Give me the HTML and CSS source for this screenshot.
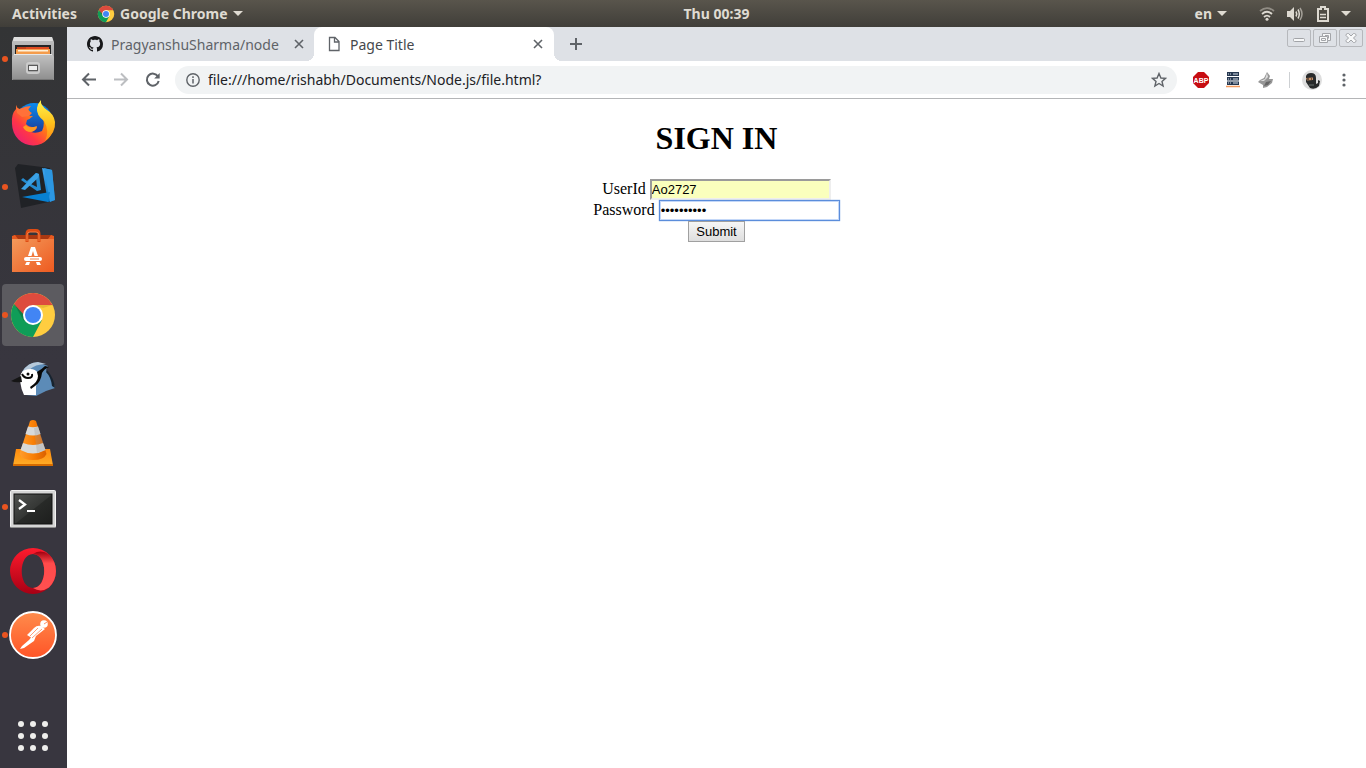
FILE: index.html
```html
<!DOCTYPE html>
<html lang="en">
<head>
<meta charset="utf-8">
<title>Page Title</title>
<link rel="stylesheet" href="styles.css">
</head>
<body>
<svg class="defs" width="0" height="0" aria-hidden="true">
  <defs>
    <linearGradient id="steel" x1="0" y1="0" x2="0" y2="1"><stop offset="0" stop-color="#c2c2c2"/><stop offset="1" stop-color="#8e8e8e"/></linearGradient>
    <linearGradient id="fox" x1="0" y1="1" x2="1" y2="0"><stop offset="0" stop-color="#e31587"/><stop offset=".35" stop-color="#ff3647"/><stop offset=".7" stop-color="#ff9a00"/><stop offset="1" stop-color="#ffe226"/></linearGradient>
    <linearGradient id="tail" x1="0" y1="0" x2="0" y2="1"><stop offset="0" stop-color="#fff44f"/><stop offset=".55" stop-color="#ffc21c"/><stop offset="1" stop-color="#ff8a16"/></linearGradient>
    <linearGradient id="globe" x1="0" y1="0" x2="0" y2="1"><stop offset="0" stop-color="#0a8cf0"/><stop offset="1" stop-color="#20247e"/></linearGradient>
    <linearGradient id="bag" x1="0" y1="0" x2="1" y2="1"><stop offset="0" stop-color="#f39a5b"/><stop offset="1" stop-color="#ee5a20"/></linearGradient>
    <linearGradient id="cone" x1="0" y1="0" x2="1" y2="0"><stop offset="0" stop-color="#ff9d2e"/><stop offset=".5" stop-color="#f98006"/><stop offset="1" stop-color="#d95f00"/></linearGradient>
    <linearGradient id="conebase" x1="0" y1="0" x2="0" y2="1"><stop offset="0" stop-color="#ff8a0c"/><stop offset="1" stop-color="#ffae28"/></linearGradient>
    <linearGradient id="screen" x1="0" y1="0" x2="1" y2="1"><stop offset="0" stop-color="#505250"/><stop offset=".5" stop-color="#353735"/><stop offset=".52" stop-color="#282a28"/><stop offset="1" stop-color="#1d1e1d"/></linearGradient>
    <linearGradient id="opera" x1="0" y1="0" x2="0" y2="1"><stop offset="0" stop-color="#ff1b2d"/><stop offset="1" stop-color="#a70014"/></linearGradient>
    <linearGradient id="operaback" x1="0" y1="0" x2="0" y2="1"><stop offset="0" stop-color="#a00010"/><stop offset=".3" stop-color="#ff4b4b"/><stop offset="1" stop-color="#ff5050"/></linearGradient>
    <linearGradient id="post" x1="0" y1="0" x2="0" y2="1"><stop offset="0" stop-color="#ff8c4c"/><stop offset="1" stop-color="#ff5427"/></linearGradient>
    <linearGradient id="blade" x1="0" y1="0" x2="0" y2="1"><stop offset="0" stop-color="#42a5ec"/><stop offset="1" stop-color="#0673c4"/></linearGradient>
    <symbol id="chrome" viewBox="0 0 48 48">
      <circle cx="24" cy="24" r="22" fill="#ffcd40"/>
      <path d="M24 14H43.600A22 22 0 0 0 5 13L15 30 16 24Z" fill="#dd4b3e"/>
      <path d="M5 13A22 22 0 0 0 24 46L33 29 24 33 15.500 29Z" fill="#0f9d58"/>
      <path d="M24 14H43.600L34 17Z" fill="#e8b935"/>
      <path d="M15 30 5 13 16 25Z" fill="#0b8047"/>
      <circle cx="24" cy="24" r="10" fill="#fff"/>
      <circle cx="24" cy="24" r="8" fill="#4285f4"/>
    </symbol>
  </defs>
</svg>
<div class="desktop">
  <header class="panel">
    <nav class="panel-left">
      <button type="button">Activities</button>
      <button type="button" class="app-menu"><svg width="18" height="18" aria-hidden="true"><use href="#chrome"/></svg>Google Chrome<i class="caret"></i></button>
    </nav>
    <button type="button" class="clock">Thu 00:39</button>
    <div class="panel-right">
      <button type="button" class="lang">en<i class="caret"></i></button>
      <button type="button" class="status" aria-label="System">
        <svg width="16" height="16" viewBox="0 0 16 16" fill="none" stroke="#ddd9d1" stroke-width="1.800"><path d="M1 5Q8-.8 15 5" opacity=".45"/><path d="M3 8Q8 3.600 13 8M5 11Q8 8.200 11 11"/><circle cx="8" cy="13.200" r="1.500" fill="#ddd9d1" stroke="none"/></svg>
        <svg width="16" height="16" viewBox="0 0 16 16" fill="none" stroke="#ddd9d1" stroke-width="1.500"><path d="M0 5H3L7 1V15L3 11H0Z" fill="#ddd9d1" stroke="none"/><path d="M9 5.500Q10.500 8 9 10.500M11 3.500Q13.600 8 11 12.500"/><path d="M13 2Q17 8 13 14" opacity=".6"/></svg>
        <svg width="16" height="16" viewBox="0 0 16 16" fill="none" stroke="#ddd9d1"><path d="M6 3V1H10V3H13V15H3V3Z" stroke-width="2"/><path d="M5 8.500H11M5 11.500H11" stroke-width="1.600"/></svg>
        <i class="caret"></i>
      </button>
    </div>
  </header>

  <nav class="dock" aria-label="Dock">
    <button type="button" class="running" aria-label="Files"><svg viewBox="0 0 66 64">
      <path d="M14 10H52L54 15V51H12V15Z" fill="url(#steel)"/><path d="M14 10H52L53 14H13Z" fill="#dedede"/>
      <path d="M15 18H51V28H15Z" fill="#252525"/><path d="M17 20H49V27H17Z" fill="#c4421b"/><path d="M26 20H49V22H26Z" fill="#df4b20"/><path d="M16 22H50V28H16Z" fill="#f49c4c"/><path d="M18 23H48V24.500H18Z" fill="#fff0d7"/>
      <path d="M14 27H52L54 30V53H12V30Z" fill="url(#steel)"/><path d="M14 27.500H52" stroke="#e7e7e7"/><path d="M13 52.500H53" stroke="#777"/>
      <rect x="27" y="36" width="12" height="10" rx="2" fill="#a9a9a9" stroke="#cbcbcb" stroke-width="2"/><rect x="28.500" y="38.500" width="9" height="5" fill="#eee" stroke="#5a5a5a"/>
    </svg></button>
    <button type="button" aria-label="Firefox"><svg viewBox="0 0 66 64">
      <circle cx="34" cy="31" r="19" fill="url(#globe)"/>
      <path d="M16 14Q17 18 20 18Q24 16 27 17L31 22 29 25 33 25Q30 28 27 29L26 33Q30 37 37 36 37 39 31 41 36 43 42 40 46 32 41 22Q49 24 54 32A21 22 0 0 1 12 33Q11 23 16 18Z" fill="url(#fox)"/>
      <path d="M16 14Q17 18 20 18Q25 15 31 15Q28 18 28 20L32 22 29 25 22 26 17 22Z" fill="#ff7139"/>
      <path d="M41 9Q40 14 47 19Q54 23 55 31Q56 42 45 50Q50 40 44 30Q36 24 37 17Q38 12 41 9Z" fill="url(#tail)"/>
      <path d="M26 34Q29 38 37 35Q36 40 31 41Q25 41 23 36Z" fill="#ff9a21"/>
    </svg></button>
    <button type="button" class="running" aria-label="Visual Studio Code"><svg viewBox="0 0 66 64">
      <path d="M18 9 50 13 53 46 21 53 15 13Z" fill="#202226"/>
      <path d="M42 13 52 15 55 45 48 47Z" fill="url(#blade)"/><path d="M44 13 52 15 55 45 50 47Z" fill="#2c97e2"/><path d="M22 42 50 37 48 47Z" fill="#0880d1"/>
      <path d="M36 18 39 19 41 35 37 36 21 25 23 23 27 26ZM36 23 31 29 37 32Z" fill="#248bd0" fill-rule="evenodd"/><path d="M36 18 39 19 38 23 25 35 21 34Z" fill="#3ba1e5"/>
    </svg></button>
    <button type="button" aria-label="Ubuntu Software"><svg viewBox="0 0 66 64">
      <path d="M14 16H52L54 20H12Z" fill="#a93811"/><path d="M12 17 15 16 18 20H12ZM54 17 51 16 48 20H54Z" fill="#e75b21"/>
      <path d="M12 20H54V53H12Z" fill="url(#bag)"/><path d="M27 23V15Q27 11.500 30 11.500H36Q39 11.500 39 15V23" fill="none" stroke="#df4c13" stroke-width="3"/><path d="M27 22V16Q27 13 30 13H36Q39 13 39 16V22" fill="none" stroke="#f17c43"/>
      <path d="M31 28H35L38 37H34.500L33 32 31.500 37H28ZM26.500 43H30L29 46H25ZM36 43H39.500L41 46H37Z" fill="#fff"/><rect x="24" y="38" width="18" height="4" rx="2" fill="#fff"/><path d="M30 40H39" stroke="#ee8551"/>
    </svg></button>
    <button type="button" class="running active" aria-label="Google Chrome"><svg viewBox="0 0 66 64"><use href="#chrome" x="9" y="8" width="48" height="48"/></svg></button>
    <button type="button" aria-label="Bluejay"><svg viewBox="0 0 66 64">
      <path d="M22 25Q28 15 38 15.500L48 19 46 23Q52 29 55 41L46 44 36 49 26 48Z" fill="#5c8bb7"/><path d="M22 25Q28 15 38 15L46 17Q35 17 29 23Z" fill="#b6c9da"/>
      <path d="M20 32Q20 25 25 23Q34 20 38 26Q40 33 36 39L36 48 24 48Q21 42 20 34Z" fill="#fff"/>
      <path d="M11 34 21 29 22 35Q15 36 11 34Z" fill="#151515"/>
      <path d="M22 27Q24 31 28 31Q33 31 32 27" fill="none" stroke="#080808" stroke-width="2"/><circle cx="28" cy="27" r="1.500" fill="#080808"/>
      <path d="M37 25Q42 22 45 19L49 20Q44 22 42 26Q41 35 35 39L31 42 30 40Q38 35 38 29Z" fill="#080808"/>
      <path d="M47 23Q54 31 55 41L52 39Q51 30 46 25Z" fill="#17232e"/>
    </svg></button>
    <button type="button" aria-label="VLC"><svg viewBox="0 0 66 64">
      <path d="M16 38H50L53 54.500H13Z" fill="url(#conebase)"/><path d="M13 53H53V55H13Z" fill="#d66b00"/>
      <path d="M30 10Q33 8 36 10L46.500 43Q44 49 33 49 22 49 19.500 43Z" fill="url(#cone)"/>
      <path d="M28 15.500Q33 17 38 15.500L40.500 23Q33 26 25.500 23ZM23 32Q33 36 43 32L45.500 39Q33 46 20.500 39Z" fill="#d7d9d9"/><path d="M34 17 38 15.500 45.500 39 37 42Z" fill="#999" opacity=".3"/>
    </svg></button>
    <button type="button" class="running" aria-label="Terminal"><svg viewBox="0 0 66 64">
      <rect x="10.500" y="15.500" width="45" height="37" rx="1" fill="#d5d5d5" stroke="#f2f2f2"/><path d="M11 52.500H55" stroke="#8d8d8d"/><rect x="14" y="19" width="38" height="30" fill="url(#screen)" stroke="#111"/>
      <path d="M19 25 25 29.500 19 34" fill="none" stroke="#fff" stroke-width="2.300"/><path d="M27 36H35" stroke="#fff" stroke-width="2"/>
    </svg></button>
    <button type="button" aria-label="Opera"><svg viewBox="0 0 66 64">
      <path d="M33 9A23 23 0 0 1 33 55A23 23 0 0 1 33 9ZM33 15C18 15 18 49 33 49S48 15 33 15Z" fill="url(#opera)" fill-rule="evenodd"/>
      <path d="M33 15Q41 10 49 15.500A23 23 0 0 1 49 48.500Q41 54 33 49C48 49 48 15 33 15Z" fill="url(#operaback)"/>
    </svg></button>
    <button type="button" class="running" aria-label="Postman"><svg viewBox="0 0 66 64">
      <circle cx="33" cy="32" r="23" fill="url(#post)" stroke="#fff" stroke-width="1.800"/><circle cx="44" cy="21" r="3.800" fill="#fff"/><path d="M44 21 47 19" stroke="#ff713c" stroke-width=".8"/>
      <path d="M41 23Q37 22 34 25L27 32 31 34.500 29 37 22 43 20 46 24 45 34 38 36 33 45 26Z" fill="#fff"/><path d="M42 26 32 35M38 25 30 33" fill="none" stroke="#ff743f" stroke-width=".7"/>
    </svg></button>
    <button type="button" class="apps" aria-label="Show Applications"><svg viewBox="0 0 66 64" fill="#eeeeec"><circle cx="21" cy="20" r="3"/><circle cx="33" cy="20" r="3"/><circle cx="45" cy="20" r="3"/><circle cx="21" cy="32" r="3"/><circle cx="33" cy="32" r="3"/><circle cx="45" cy="32" r="3"/><circle cx="21" cy="44" r="3"/><circle cx="33" cy="44" r="3"/><circle cx="45" cy="44" r="3"/></svg></button>
  </nav>

  <div class="browser">
    <div class="tabstrip">
      <div class="tab">
        <svg width="16" height="16" viewBox="0 0 16 16" aria-hidden="true"><path fill="#17181a" d="M8 0C3.580 0 0 3.580 0 8c0 3.540 2.290 6.530 5.470 7.590.4.070.55-.17.55-.38 0-.19-.01-.82-.01-1.490-2.010.37-2.530-.49-2.690-.94-.09-.23-.48-.94-.82-1.130-.28-.15-.68-.52-.01-.53.63-.01 1.080.58 1.230.82.72 1.210 1.870.87 2.330.66.070-.52.28-.87.51-1.070-1.780-.2-3.640-.89-3.640-3.950 0-.87.31-1.590.82-2.150-.08-.2-.36-1.020.08-2.120 0 0 .67-.21 2.200.82.64-.18 1.320-.27 2-.27s1.360.09 2 .27c1.530-1.040 2.200-.82 2.200-.82.44 1.100.16 1.920.08 2.120.51.56.82 1.270.82 2.150 0 3.070-1.870 3.750-3.650 3.950.29.25.54.73.54 1.480 0 1.070-.01 1.930-.01 2.200 0 .21.15.46.55.38A8.010 8.010 0 0 0 16 8c0-4.420-3.580-8-8-8z"/></svg>
        <span class="tab-title">PragyanshuSharma/node</span>
        <button type="button" class="close" aria-label="Close tab"><svg width="10" height="10" viewBox="0 0 10 10"><path d="M1 1 9 9M9 1 1 9"/></svg></button>
      </div>
      <div class="tab current">
        <svg width="16" height="16" viewBox="0 0 16 16" aria-hidden="true"><path d="M3.500 1.500H9L13 5.500V14.500H3.500ZM8.500 1.500V6H13" fill="none" stroke="#5f6368" stroke-width="1.300"/></svg>
        <span class="tab-title">Page Title</span>
        <button type="button" class="close" aria-label="Close tab"><svg width="10" height="10" viewBox="0 0 10 10"><path d="M1 1 9 9M9 1 1 9"/></svg></button>
      </div>
      <button type="button" class="new-tab" aria-label="New tab"><svg width="12" height="12" viewBox="0 0 12 12"><path d="M6 0V12M0 6H12"/></svg></button>
      <div class="window-controls">
        <button type="button" aria-label="Minimize"><svg width="14" height="12" viewBox="0 0 14 12"><rect x="1.500" y="6.500" width="11" height="3" rx="1"/></svg></button>
        <button type="button" aria-label="Restore"><svg width="14" height="12" viewBox="0 0 14 12"><path d="M4.500 1.500H12.500V8.500H9.500V10.500H1.500V4.500H4.500ZM4.500 4.500H9.500V8.500M7 3.500H10.500V6.500M3.500 6.500H7.500V8.500H3.500Z"/></svg></button>
        <button type="button" aria-label="Close"><svg width="14" height="12" viewBox="0 0 14 12"><path d="M2 2.500 3.500 1.500H4.500L7 4 9.500 1.500H10.500L12 2.500V3.500L9.500 6 12 8.500V9.500L10.500 10.500H9.500L7 8 4.500 10.500H3.500L2 9.500V8.500L4.500 6 2 3.500Z"/></svg></button>
      </div>
    </div>
    <div class="toolbar">
      <div class="nav-buttons">
        <button type="button" aria-label="Back"><svg width="16" height="16" viewBox="0 0 16 16"><path d="M15 7.500H2M8 1.500 2 7.500 8 13.500"/></svg></button>
        <button type="button" aria-label="Forward" disabled><svg width="16" height="16" viewBox="0 0 16 16"><path d="M1 7.500H14M8 1.500 14 7.500 8 13.500"/></svg></button>
        <button type="button" aria-label="Reload"><svg width="16" height="16" viewBox="0 0 16 16"><path d="M13 4.500A6 6 0 1 0 13.700 9"/><path d="M14.700 1V6.500H9.200Z" fill="#5f6368" stroke="none"/></svg></button>
      </div>
      <div class="omnibox">
        <svg width="14" height="14" viewBox="0 0 14 14" fill="none" stroke="#5f6368" aria-hidden="true"><circle cx="7" cy="7" r="6.200" stroke-width="1.400"/><path d="M7 6V10.500M7 3.300V5" stroke-width="1.500"/></svg>
        <input type="text" aria-label="Address" value="file:///home/rishabh/Documents/Node.js/file.html?">
        <button type="button" aria-label="Bookmark"><svg width="16" height="16" viewBox="0 0 16 16"><path d="M8 1.500 9.900 6 14.500 6.300 11 9.400 12.100 14 8 11.500 3.900 14 5 9.400 1.500 6.300 6.100 6Z" fill="none" stroke="#5f6368" stroke-width="1.400"/></svg></button>
      </div>
      <div class="extensions">
        <button type="button" aria-label="Adblock Plus"><svg width="16" height="16" viewBox="0 0 16 16"><path d="M5 0H11L16 5V11L11 16H5L0 11V5Z" fill="#c70d12"/><text class="abp" x="8" y="11" text-anchor="middle">ABP</text></svg></button>
        <button type="button" aria-label="Servers"><svg width="16" height="16" viewBox="0 0 16 16"><path d="M2 0H14V4H2ZM2 5H14V8.500H2ZM2 9.500H14V13H2Z" fill="#263850"/><path d="M3 2H4M5 2H6M8 2H13M3 7H4M5 7H6M8 7H13M3 11H4M5 11H6M8 11H13" stroke="#d3dce6"/><path d="M1 14.500H15" stroke="#f39a5c" stroke-width="1.500"/></svg></button>
        <button type="button" aria-label="Bird"><svg width="16" height="16" viewBox="0 0 16 16"><path d="M10 0 13 4 12 7 16 7 15 11 10 15 6 16 6 13 1 10 3 8 7 6Z" fill="#979797"/><path d="M10 1 11 5 7 9 3 9 8 7Z" fill="#dedede"/><path d="M9 10 14 9 11 13 7 14Z" fill="#666"/></svg></button>
        <span class="divider"></span>
      </div>
      <button type="button" class="profile" aria-label="Profile"><svg width="20" height="20" viewBox="0 0 20 20"><circle cx="10" cy="10" r="10" fill="#dedede"/><path d="M4 6Q5 3 9 3 14 3 14 8V14L16 13 16 10 18 11 17 16Q13 20 8 18L6 15 4 12Z" fill="#282a2b"/><path d="M4 8 11 7.500 11 10 5 10.500Z" fill="#c58e65"/><path d="M5 9H7M9 9H10" stroke="#111"/><path d="M7 15 12 15" stroke="#68706e"/></svg></button>
      <button type="button" aria-label="Menu"><svg width="4" height="16" viewBox="0 0 4 16" fill="#5f6368"><circle cx="2" cy="3" r="1.600"/><circle cx="2" cy="8" r="1.600"/><circle cx="2" cy="13" r="1.600"/></svg></button>
    </div>
    <main class="page">
      <h1>SIGN IN</h1>
      <form>
        <div class="field"><label for="userid">UserId</label><input class="filled" type="text" id="userid" value="Ao2727"></div>
        <div class="field"><label for="password">Password</label><input class="focused" type="password" id="password" value="aaaaaaaaaa"></div>
        <button class="submit" type="button">Submit</button>
      </form>
    </main>
  </div>
</div>
</body>
</html>
```
FILE: styles.css
```css
* { box-sizing: border-box; }
body { margin: 0; background: #fff; font-family: "Noto Sans", "Open Sans", sans-serif; }
button { margin: 0; padding: 0; border: 0; background: none; color: inherit; font: inherit; }
svg { display: block; flex: none; }
.defs { position: absolute; }

.desktop { display: grid; grid-template: auto 1fr / auto 1fr; min-height: 100vh; }

/* Top panel */
.panel {
  grid-column: 1 / -1;
  display: grid;
  grid-template-columns: 1fr auto 1fr;
  align-items: center;
  height: 27px;
  background: linear-gradient(#59554c, #403e39);
  color: #dfdbd2;
  font-size: 14px;
  font-weight: 700;
}
.panel button { display: flex; align-items: center; }
.panel-left { display: flex; gap: 20px; padding-left: 12px; }
.app-menu { gap: 5px; }
.clock { padding-left: 67px; }
.panel-right { display: flex; justify-content: flex-end; gap: 32px; padding-right: 15px; }
.panel .lang { gap: 5px; }
.panel .status { gap: 12px; }
.panel .status .caret { margin-left: -2px; }
.caret { border: 5px solid transparent; border-top-color: #dfdbd2; border-bottom: 0; }

/* Dock */
.dock { display: flex; flex-direction: column; width: 67px; background: linear-gradient(#333435, #38363f 45%, #38363f); }
.dock button { position: relative; width: 66px; height: 64px; }
.dock svg { position: relative; width: 66px; height: 64px; }
.dock .running::after {
  content: "";
  position: absolute;
  left: 2px;
  top: 29px;
  width: 6px;
  height: 6px;
  border-radius: 50%;
  background: #e95420;
}
.dock .active::before {
  content: "";
  position: absolute;
  inset: 1px 2px;
  border-radius: 4px;
  background: #5c5b60;
}
.dock .apps { margin-top: auto; }

/* Browser window */
.browser { display: flex; flex-direction: column; min-width: 0; background: #fff; }
.tabstrip { display: flex; height: 34px; background: #dee1e6; color: #5f6368; font-size: 14px; }
.tab { display: flex; align-items: center; gap: 8px; width: 247px; padding: 0 10px 0 20px; white-space: nowrap; }
.tab-title { flex: 1; overflow: hidden; }
.current { position: relative; width: 240px; padding: 0 11px 0 12px; border-radius: 8px 8px 0 0; background: #fff; color: #45494d; }
.current::before, .current::after { content: ""; position: absolute; bottom: 0; width: 8px; height: 8px; }
.current::before { left: -8px; background: radial-gradient(circle at 0 0, #dee1e6 8px, #fff 8px); }
.current::after { right: -8px; background: radial-gradient(circle at 100% 0, #dee1e6 8px, #fff 8px); }
.close path, .new-tab path { fill: none; stroke: #5f6368; stroke-width: 1.6; }
.new-tab path { stroke-width: 2; }
.new-tab { margin-left: 16px; }
.window-controls { display: flex; gap: 2px; margin-left: auto; padding: 2px 3px 0 0; }
.window-controls button { display: grid; place-items: center; width: 24px; height: 18px; border: 1px solid #b6b8bc; border-radius: 2px; }
.window-controls svg { fill: #f7f8f9; stroke: #a2a4a8; }

.toolbar { display: flex; align-items: center; height: 38px; padding: 0 20px 0 14px; border-bottom: 1px solid #b4b5b7; }
.nav-buttons { display: flex; gap: 16px; margin-right: 14px; }
.nav-buttons svg { fill: none; stroke: #5f6368; stroke-width: 2; }
.nav-buttons :disabled svg { stroke: #bcbec1; }
.omnibox { flex: 1; display: flex; align-items: center; gap: 8px; height: 28px; padding: 0 10px 0 11px; border-radius: 14px; background: #f1f3f4; }
.omnibox input { flex: 1; min-width: 0; padding: 0; border: 0; outline: 0; background: none; color: #202124; font: 14px "Noto Sans", sans-serif; }
.extensions { display: flex; align-items: center; gap: 16px; margin-left: 16px; }
.abp { fill: #fff; font: bold 7px "Liberation Sans", sans-serif; }
.divider { width: 1px; height: 16px; background: #cdd0d3; }
.profile { margin: 0 20px 0 12px; }

/* Web page */
.page { padding: 21px 8px; color: #000; font: 16px "Liberation Serif", serif; text-align: center; }
.page h1 { margin: 0 0 22px; font-size: 32px; line-height: 37px; }
.page form { display: flex; flex-direction: column; align-items: center; }
.field { display: flex; gap: 4px; height: 21px; line-height: 19px; }
.field input { width: 181px; height: 21px; padding: 1px 0; border: 2px inset #eee; background: #fff; font: 13px "Liberation Sans", sans-serif; outline: 0; }
.field .filled { background: #faffbd; border-color: #9a9a9a #eee #eee #9a9a9a; border-style: solid; }
.field .focused { border: 1px solid #5b8ddb; box-shadow: inset 0 0 0 1px #c4d8f8, 0 0 1px #5b8ddb; padding-left: 1px; }
.submit { height: 21px; padding: 0 7px; border: 1px solid #a0a0a0; background: linear-gradient(#f6f6f6, #dedede); font: 13px "Liberation Sans", sans-serif; }
```
